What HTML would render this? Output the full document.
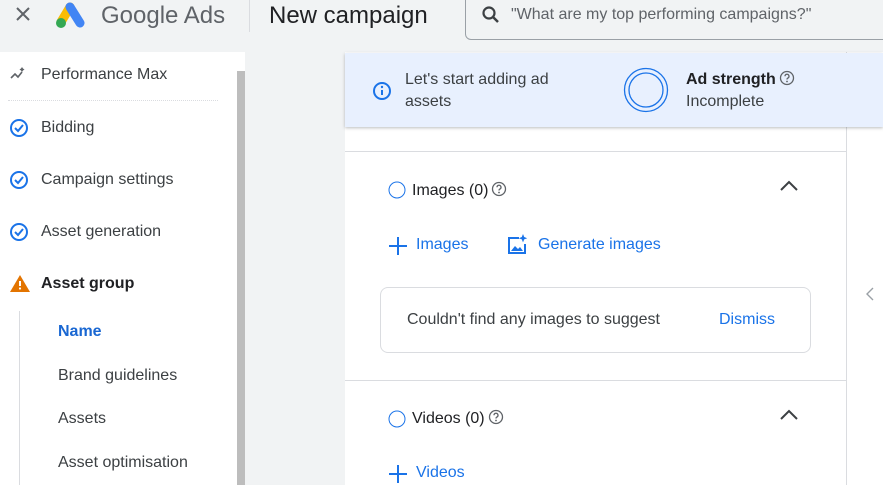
<!DOCTYPE html>
<html><head><meta charset="utf-8"><style>
*{margin:0;padding:0;box-sizing:border-box}
body{width:883px;height:485px;overflow:hidden;background:#f1f3f4;font-family:"Liberation Sans",Arial,sans-serif;position:relative;color:#3c4043}
.a{position:absolute}
.t{font-size:16px;color:#3c4043;white-space:nowrap}
.blue{color:#1a73e8}
.q{display:inline-block;vertical-align:-2px;margin-left:3px}
</style></head><body>
<!-- top bar -->
<svg class="a" style="left:15px;top:6px" width="16" height="16"><path d="M2 2l12 12M14 2L2 14" stroke="#5f6368" stroke-width="2"/></svg>
<svg class="a" style="left:53px;top:1px" width="38" height="28" viewBox="0 0 38 28">
<path d="M17 6 L8 21" stroke="#fbbc04" stroke-width="9" stroke-linecap="round"/>
<path d="M17 6 L27 22" stroke="#4285f4" stroke-width="9" stroke-linecap="round"/>
<circle cx="8" cy="22" r="5" fill="#34a853"/></svg>
<div class="a" style="left:101px;top:2px;font-size:24px;color:#5f6368">Google Ads</div>
<div class="a" style="left:249px;top:0;width:1px;height:32px;background:#dadce0"></div>
<div class="a" style="left:269px;top:2px;font-size:24px;color:#202124">New campaign</div>
<div class="a" style="left:465px;top:-6px;width:430px;height:46px;border:1px solid #9aa0a6;border-radius:6px"></div>
<svg class="a" style="left:481px;top:5px" width="20" height="20" viewBox="0 0 20 20"><circle cx="8" cy="8" r="5.5" stroke="#3c4043" stroke-width="2.2" fill="none"/><path d="M12 12l5 5" stroke="#3c4043" stroke-width="2.5"/></svg>
<div class="a t" style="left:511px;top:6px;font-size:16px;color:#5f6368">"What are my top performing campaigns?"</div>

<!-- sidebar -->
<div class="a" style="left:0;top:52px;width:245px;height:433px;background:#fff"></div>
<div class="a" style="left:237px;top:71px;width:8px;height:414px;background:#bdbdbd"></div>
<svg class="a" style="left:10px;top:67px" width="16" height="14" viewBox="0 0 16 14"><path d="M1 11l4-4 3 3 4-5" stroke="#5f6368" stroke-width="1.6" fill="none"/><path d="M12 0l1 1.5 1.5 1-1.5 1-1 1.5-1-1.5-1.5-1 1.5-1z" fill="#5f6368"/></svg>
<div class="a t" style="left:41px;top:66px">Performance Max</div>
<div class="a" style="left:8px;top:100px;width:210px;border-top:1px dotted #dadce0"></div>
<svg class="a" style="left:9px;top:118px" width="20" height="20" viewBox="0 0 20 20"><circle cx="10" cy="10" r="8" stroke="#1a73e8" stroke-width="2" fill="none"/><path d="M6 10l3 3 5-6" stroke="#1a73e8" stroke-width="2" fill="none"/></svg>
<div class="a t" style="left:41px;top:119px">Bidding</div>
<svg class="a" style="left:9px;top:170px" width="20" height="20" viewBox="0 0 20 20"><circle cx="10" cy="10" r="8" stroke="#1a73e8" stroke-width="2" fill="none"/><path d="M6 10l3 3 5-6" stroke="#1a73e8" stroke-width="2" fill="none"/></svg>
<div class="a t" style="left:41px;top:171px">Campaign settings</div>
<svg class="a" style="left:9px;top:222px" width="20" height="20" viewBox="0 0 20 20"><circle cx="10" cy="10" r="8" stroke="#1a73e8" stroke-width="2" fill="none"/><path d="M6 10l3 3 5-6" stroke="#1a73e8" stroke-width="2" fill="none"/></svg>
<div class="a t" style="left:41px;top:223px">Asset generation</div>
<svg class="a" style="left:9px;top:274px" width="22" height="19" viewBox="0 0 22 19"><path d="M11 1L21 18H1z" fill="#e37400"/><path d="M11 7v5" stroke="#fff" stroke-width="2"/><circle cx="11" cy="14.5" r="1.1" fill="#fff"/></svg>
<div class="a t" style="left:41px;top:275px;font-weight:bold;color:#202124">Asset group</div>
<div class="a" style="left:19px;top:311px;width:1px;height:174px;background:#dadce0"></div>
<div class="a t" style="left:58px;top:323px;font-weight:bold;color:#1967d2">Name</div>
<div class="a t" style="left:58px;top:367px">Brand guidelines</div>
<div class="a t" style="left:58px;top:410px">Assets</div>
<div class="a t" style="left:58px;top:454px">Asset optimisation</div>

<!-- main card -->
<div class="a" style="left:345px;top:52px;width:502px;height:433px;background:#fff;border-right:1px solid #dadce0"></div>
<div class="a" style="left:847px;top:52px;width:36px;height:433px;background:#fff"></div>
<div class="a" style="left:345px;top:53px;width:538px;height:74px;background:#e8f0fe;box-shadow:0 1px 3px rgba(60,64,67,.35)"></div>
<svg class="a" style="left:372px;top:81px" width="20" height="20" viewBox="0 0 20 20"><circle cx="10" cy="10" r="8" stroke="#1a73e8" stroke-width="2" fill="none"/><path d="M10 9v5" stroke="#1a73e8" stroke-width="2"/><circle cx="10" cy="6" r="1.2" fill="#1a73e8"/></svg>
<div class="a t" style="left:405px;top:69px;line-height:22px">Let's start adding ad<br>assets</div>
<svg class="a" style="left:622px;top:66px" width="48" height="48" viewBox="0 0 48 48"><circle cx="24" cy="24" r="21.5" stroke="#1a73e8" stroke-width="1.3" fill="none"/><circle cx="24" cy="24" r="17" stroke="#1a73e8" stroke-width="1.3" fill="none"/></svg>
<div class="a t" style="left:686px;top:69px;line-height:22px"><b style="font-weight:bold;color:#202124">Ad strength</b><svg class="q" width="16" height="16" viewBox="0 0 16 16"><circle cx="8" cy="8" r="6.5" stroke="#5f6368" stroke-width="1.3" fill="none"/><path d="M6 6.3a2 2 0 1 1 2.8 1.8c-.6.3-.8.7-.8 1.4" stroke="#5f6368" stroke-width="1.3" fill="none"/><circle cx="8" cy="11.5" r=".9" fill="#5f6368"/></svg><br>Incomplete</div>
<div class="a" style="left:345px;top:151px;width:502px;height:1px;background:#dadce0"></div>

<svg class="a" style="left:388px;top:181px" width="18" height="18"><circle cx="9" cy="9" r="8" stroke="#1a73e8" stroke-width="1" fill="none"/></svg>
<div class="a t" style="left:412px;top:181px;color:#202124">Images (0)<svg class="q" width="16" height="16" viewBox="0 0 16 16"><circle cx="8" cy="8" r="6.5" stroke="#5f6368" stroke-width="1.3" fill="none"/><path d="M6 6.3a2 2 0 1 1 2.8 1.8c-.6.3-.8.7-.8 1.4" stroke="#5f6368" stroke-width="1.3" fill="none"/><circle cx="8" cy="11.5" r=".9" fill="#5f6368"/></svg></div>
<svg class="a" style="left:779px;top:180px" width="20" height="12"><path d="M2 10l8-8 8 8" stroke="#3c4043" stroke-width="2" fill="none"/></svg>
<svg class="a" style="left:388px;top:236px" width="20" height="20"><path d="M10 1v18M1 10h18" stroke="#1a73e8" stroke-width="2"/></svg>
<div class="a t blue" style="left:416px;top:236px">Images</div>
<svg class="a" style="left:506px;top:234px" width="22" height="22" viewBox="0 0 22 22"><path d="M13 4H3v15h16V10" stroke="#1a73e8" stroke-width="2" fill="none"/><path d="M5 17l4-5 3 3 2-2 3 4z" fill="#1a73e8"/><path d="M17 0l1.2 3 3 1.2-3 1.2-1.2 3-1.2-3-3-1.2 3-1.2z" fill="#1a73e8"/></svg>
<div class="a t blue" style="left:538px;top:236px">Generate images</div>

<div class="a" style="left:380px;top:287px;width:431px;height:66px;border:1px solid #dadce0;border-radius:8px"></div>
<div class="a t" style="left:407px;top:311px">Couldn't find any images to suggest</div>
<div class="a t blue" style="left:719px;top:311px">Dismiss</div>
<div class="a" style="left:345px;top:380px;width:502px;height:1px;background:#dadce0"></div>
<svg class="a" style="left:865px;top:286px" width="10" height="16"><path d="M8 2L2 8l6 6" stroke="#9aa0a6" stroke-width="1.4" fill="none"/></svg>

<svg class="a" style="left:388px;top:410px" width="18" height="18"><circle cx="9" cy="9" r="8" stroke="#1a73e8" stroke-width="1" fill="none"/></svg>
<div class="a t" style="left:412px;top:409px;color:#202124">Videos (0)<svg class="q" width="16" height="16" viewBox="0 0 16 16"><circle cx="8" cy="8" r="6.5" stroke="#5f6368" stroke-width="1.3" fill="none"/><path d="M6 6.3a2 2 0 1 1 2.8 1.8c-.6.3-.8.7-.8 1.4" stroke="#5f6368" stroke-width="1.3" fill="none"/><circle cx="8" cy="11.5" r=".9" fill="#5f6368"/></svg></div>
<svg class="a" style="left:779px;top:409px" width="20" height="12"><path d="M2 10l8-8 8 8" stroke="#3c4043" stroke-width="2" fill="none"/></svg>
<svg class="a" style="left:388px;top:464px" width="20" height="20"><path d="M10 1v18M1 10h18" stroke="#1a73e8" stroke-width="2"/></svg>
<div class="a t blue" style="left:416px;top:464px">Videos</div>
</body></html>
